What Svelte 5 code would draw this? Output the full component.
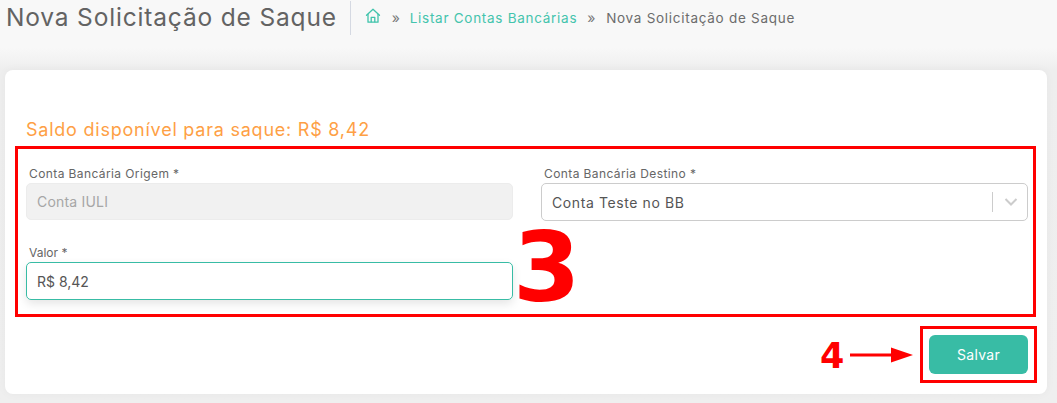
<script>
  let origem = "Conta IULI";
  let destino = "Conta Teste no BB";
  let valor = "R$ 8,42";
  const titulo = "Nova Solicitação de Saque";
</script>

<div class="page">
  <header class="top">
    <h1>{titulo}</h1>
    <nav class="crumbs">
      <svg class="home" viewBox="0 0 16 16" width="16" height="16" fill="none" stroke="#3fc3ab" stroke-width="1.3" stroke-linejoin="round">
        <path d="M1.5 7.2 8 1.3l6.500 5.900" stroke-linecap="round" />
        <path d="M3 6v8.200h10V6" />
        <path d="M6.200 14.200V9.300h3.600v4.900" />
      </svg>
      <span class="sep">»</span>
      <span class="link">Listar Contas Bancárias</span>
      <span class="sep">»</span>
      <span class="current">{titulo}</span>
    </nav>
  </header>

  <section class="card">
    <h2>Saldo disponível para saque: R$ 8,42</h2>
    <div class="form">
      <div class="field">
        <label for="origem">Conta Bancária Origem *</label>
        <div id="origem" class="input disabled">{origem}</div>
      </div>
      <div class="field">
        <label for="destino">Conta Bancária Destino *</label>
        <div id="destino" class="input select">
          <span class="grow">{destino}</span>
          <i class="bar"></i>
          <svg viewBox="0 0 14 8" width="14" height="8" fill="none" stroke="#cccccc" stroke-width="2"><path d="M1.500 1 7 6.500 12.500 1" /></svg>
        </div>
      </div>
      <div class="field">
        <label class="short" for="valor">Valor *</label>
        <div id="valor" class="input focus">{valor}</div>
      </div>
    </div>
    <div class="actions">
      <button>Salvar</button>
    </div>

    <!-- anotacoes vermelhas por cima do print -->
    <div class="mark box3"></div>
    <div class="mark box4"></div>
    <span class="num three">3</span>
    <span class="num four">4</span>
    <svg class="arrow" viewBox="0 0 64 18" width="64" height="18">
      <rect x="0" y="7.500" width="42" height="3" fill="#ff0000" />
      <path d="M41 1.500 63 9 41 16.500z" fill="#ff0000" />
    </svg>
  </section>
</div>

<style>
  :global(body) {
    margin: 0;
    background: #f8f8f8;
    font-family: "Inter", "Open Sans", sans-serif;
  }
  .page {
    width: 1057px;
    height: 403px;
    overflow: hidden;
    background: linear-gradient(#f8f8f8 0, #f8f8f8 48px, #eeeeee 70px, #efefef 100%);
    box-sizing: border-box;
    padding: 0 10px 0 5px;
  }
  .top {
    display: flex;
    align-items: flex-start;
    height: 35px;
  }
  h1 {
    margin: 2px 13px 0 1px;
    font-size: 24.500px;
    font-weight: 400;
    color: #636363;
    letter-spacing: 0.83px;
    line-height: 30px;
    white-space: nowrap;
  }
  .crumbs {
    display: flex;
    align-items: center;
    height: 34px;
    margin-top: 1px;
    border-left: 1px solid #d5d9e2;
    padding-left: 14px;
    font-size: 13.500px;
    letter-spacing: 0.72px;
    line-height: 16px;
    color: #6c6c6c;
    white-space: nowrap;
  }
  .home {
    margin-top: -5px;
    margin-right: 11px;
  }
  .sep {
    color: #777;
    margin-right: 9px;
    font-size: 14px;
  }
  .link {
    color: #44c4ad;
    margin-right: 10px;
  }
  .current {
    margin-left: 1px;
  }
  .card {
    position: relative;
    margin-top: 35px;
    height: 324px;
    width: 1042px;
    box-sizing: border-box;
    background: #fff;
    border-radius: 8px;
    padding: 49px 19px 0 21px;
    box-shadow: 0 0 10px rgba(0, 0, 0, 0.04);
  }
  h2 {
    margin: 0;
    font-size: 18px;
    line-height: 22px;
    font-weight: 400;
    color: #fe9f45;
    letter-spacing: 0.77px;
  }
  .form {
    display: grid;
    grid-template-columns: 487px 487px;
    column-gap: 28px;
    row-gap: 24px;
    margin-top: 25px;
  }
  .field label {
    display: block;
    padding-left: 3px;
    font-size: 12px;
    line-height: 16px;
    margin-bottom: 1px;
    color: #666;
    letter-spacing: 0.4px;
  }
  .field label.short {
    letter-spacing: 0;
  }
  .input {
    display: flex;
    align-items: center;
    box-sizing: border-box;
    height: 37px;
    padding: 0 10px;
    border: 1px solid #cccccc;
    border-radius: 5px;
    font-size: 14px;
    letter-spacing: 0.6px;
    color: #555;
  }
  .disabled {
    background: #f1f1f1;
    border-color: #ececec;
    color: #a6a6a6;
    letter-spacing: 0.2px;
  }
  .select {
    height: 38px;
  }
  .grow {
    flex: 1;
  }
  .bar {
    width: 1px;
    height: 20px;
    background: #cccccc;
    margin-right: 11px;
  }
  .select svg {
    margin-right: -1px;
  }
  .focus {
    height: 38px;
    border-color: #38bca5;
    box-shadow: 0 4px 10px rgba(0, 0, 0, 0.1);
    letter-spacing: 0;
  }
  .actions {
    display: flex;
    justify-content: flex-end;
    margin-top: 35px;
  }
  button {
    width: 99px;
    height: 39px;
    border: 0;
    border-radius: 6px;
    background: #38bca5;
    color: #fff;
    font: 400 14px "Inter", sans-serif;
    letter-spacing: 0.3px;
  }
  .mark {
    position: absolute;
    box-sizing: border-box;
    border: 3px solid #ff0000;
  }
  .box3 {
    left: 10px;
    top: 76px;
    width: 1021px;
    height: 171px;
  }
  .box4 {
    left: 915px;
    top: 256px;
    width: 117px;
    height: 57px;
  }
  .num {
    position: absolute;
    font-family: "DejaVu Sans", sans-serif;
    font-weight: 700;
    color: #ff0000;
  }
  .three {
    left: 508px;
    top: 158px;
    font-size: 97px;
    line-height: 80px;
  }
  .four {
    left: 815px;
    top: 264px;
    font-size: 35px;
    line-height: 44px;
  }
  .arrow {
    position: absolute;
    left: 845px;
    top: 276px;
  }
</style>
